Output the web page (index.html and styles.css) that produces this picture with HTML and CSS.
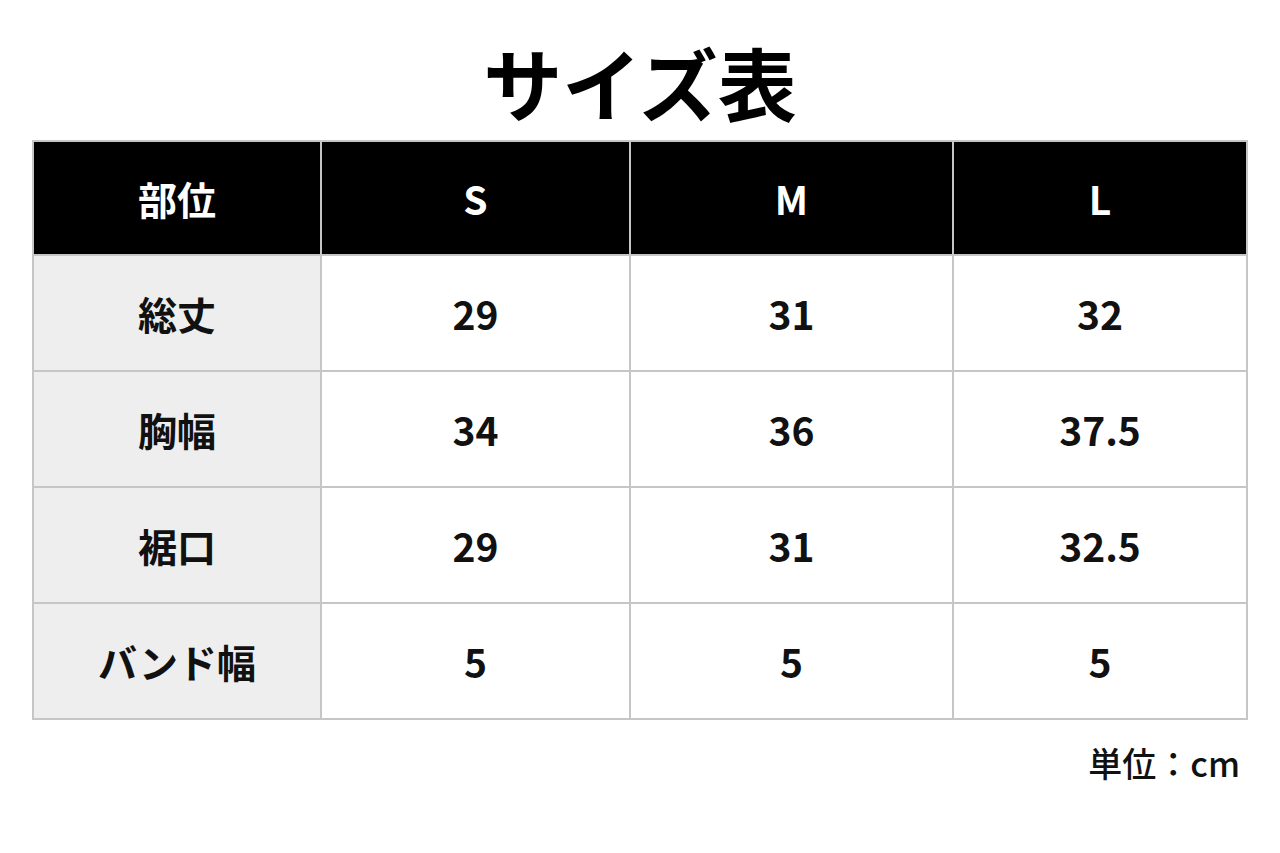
FILE: index.html
```html
<!DOCTYPE html>
<html lang="ja">
<head>
<meta charset="utf-8">
<title>サイズ表</title>
<link rel="stylesheet" href="styles.css">
</head>
<body>
<h1 class="title">サイズ表</h1>
<div class="table">
  <div class="cell head">部位</div>
  <div class="cell head">S</div>
  <div class="cell head">M</div>
  <div class="cell head">L</div>

  <div class="cell label">総丈</div>
  <div class="cell">29</div>
  <div class="cell">31</div>
  <div class="cell">32</div>

  <div class="cell label">胸幅</div>
  <div class="cell">34</div>
  <div class="cell">36</div>
  <div class="cell">37.5</div>

  <div class="cell label">裾口</div>
  <div class="cell">29</div>
  <div class="cell">31</div>
  <div class="cell">32.5</div>

  <div class="cell label">バンド幅</div>
  <div class="cell">5</div>
  <div class="cell">5</div>
  <div class="cell">5</div>
</div>
<p class="unit">単位：cm</p>
</body>
</html>
```
FILE: styles.css
```css
html, body {
  margin: 0;
  padding: 0;
  background: #ffffff;
}
body {
  font-family: "Noto Sans CJK JP", "Noto Sans", sans-serif;
  color: #111111;
}
.title {
  margin: 0;
  padding-top: 24px;
  height: 116px;
  line-height: 116px;
  text-align: center;
  font-size: 79px;
  font-weight: 700;
  color: #000000;
}
.table {
  margin: 0 32px;
  width: 1216px;
  box-sizing: border-box;
  display: grid;
  grid-template-columns: 286px 307px 321px 292px;
  grid-template-rows: 112px 114px 114px 114px 114px;
  gap: 2px;
  padding: 2px;
  background: #c6c6c6;
}
.cell {
  background: #ffffff;
  display: flex;
  align-items: center;
  justify-content: center;
  font-size: 39px;
  font-weight: 700;
  color: #111111;
}
.cell.head {
  background: #000000;
  color: #ffffff;
}
.cell.label {
  background: #eeeeee;
}
.unit {
  margin: 23px 40px 0 0;
  text-align: right;
  font-size: 34px;
  line-height: 40px;
  font-weight: 500;
  color: #111111;
}
```
